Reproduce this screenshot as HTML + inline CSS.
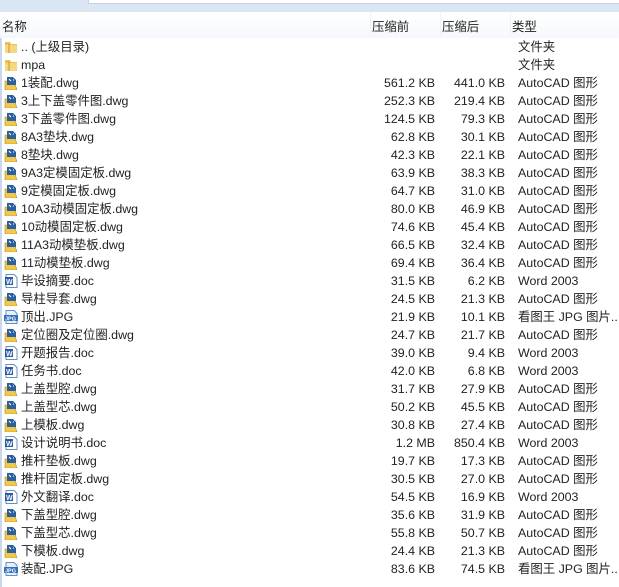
<!DOCTYPE html>
<html><head><meta charset="utf-8"><style>
*{margin:0;padding:0;box-sizing:border-box}
body{width:619px;height:587px;background:#fff;overflow:hidden;position:relative;font-family:"Liberation Sans","Noto Sans CJK SC",sans-serif;font-size:12.4px;color:#222}
.top{position:absolute;left:0;top:0;width:619px;height:12px;background:#dbe6f4}
.topbox{position:absolute;left:88px;top:0;width:531px;height:4px;background:#fff;border-bottom:1px solid #c5d3e6;border-left:1px solid #c5d3e6}
.hdr{position:absolute;left:0;top:12px;width:619px;height:26px;background:linear-gradient(#fff,#f6f8fb)}
.hdr span{position:absolute;top:5px}
.sep{position:absolute;top:12px;width:1px;height:24px;background:#eef1f5}
.lline{position:absolute;left:0;top:38px;width:2px;height:549px;background:#c9d8ea}
.row{position:absolute;left:0;height:18px;width:619px;line-height:18px;white-space:nowrap}
.row .n{position:absolute;left:21px}
.row .a{position:absolute;right:184px}
.row .b{position:absolute;right:114px}
.row .t{position:absolute;left:518px}
.ic{position:absolute;left:4px;top:2px;width:14px;height:14px}
</style></head><body>
<div class="top"></div><div class="topbox"></div>
<div class="hdr"><span style="left:2px">名称</span><span style="left:372px">压缩前</span><span style="left:442px">压缩后</span><span style="left:512px">类型</span></div>
<div class="sep" style="left:370px"></div><div class="sep" style="left:440px"></div><div class="sep" style="left:510px"></div>
<div class="lline"></div>
<svg width="0" height="0" style="position:absolute"><defs>
<symbol id="fo" viewBox="0 0 14 14"><path d="M1 2h5l1 2h6v9H1z" fill="#e8c15a"/><path d="M1 5h12v8H1z" fill="#f5d77f"/><path d="M5 4v9" stroke="#c99a2e"/></symbol>
<symbol id="dw" viewBox="0 0 14 14"><path d="M1 14V5l9 0 3 9z" fill="#f2c84b" stroke="#b08a20" stroke-width=".6"/><path d="M3 1h6l3 3v5L3 9z" fill="#2c5f9e"/><path d="M5 3l2 2M9 4h1" stroke="#fff"/></symbol>
<symbol id="wd" viewBox="0 0 14 14"><path d="M2 0.5h8l3 3v10H2z" fill="#fff" stroke="#6a8fbf"/><rect x="1" y="3" width="8" height="8" fill="#2b5ca8"/><text x="2" y="10" font-size="7" fill="#fff" font-family="Liberation Sans" font-weight="bold">W</text></symbol>
<symbol id="jp" viewBox="0 0 14 14"><path d="M2 0.5h8l3 3v10H2z" fill="#e8f0fa" stroke="#6a8fbf"/><rect x="0" y="5" width="14" height="6" fill="#2f6fbf"/><text x="1" y="10.3" font-size="5.5" fill="#fff" font-family="Liberation Sans" font-weight="bold">JPG</text></symbol>
</defs></svg>
<div class="row" style="top:38px"><svg class="ic"><use href="#fo"/></svg><span class="n">.. (上级目录)</span><span class="t">文件夹</span></div>
<div class="row" style="top:56px"><svg class="ic"><use href="#fo"/></svg><span class="n">mpa</span><span class="t">文件夹</span></div>
<div class="row" style="top:74px"><svg class="ic"><use href="#dw"/></svg><span class="n">1装配.dwg</span><span class="a">561.2 KB</span><span class="b">441.0 KB</span><span class="t">AutoCAD 图形</span></div>
<div class="row" style="top:92px"><svg class="ic"><use href="#dw"/></svg><span class="n">3上下盖零件图.dwg</span><span class="a">252.3 KB</span><span class="b">219.4 KB</span><span class="t">AutoCAD 图形</span></div>
<div class="row" style="top:110px"><svg class="ic"><use href="#dw"/></svg><span class="n">3下盖零件图.dwg</span><span class="a">124.5 KB</span><span class="b">79.3 KB</span><span class="t">AutoCAD 图形</span></div>
<div class="row" style="top:128px"><svg class="ic"><use href="#dw"/></svg><span class="n">8A3垫块.dwg</span><span class="a">62.8 KB</span><span class="b">30.1 KB</span><span class="t">AutoCAD 图形</span></div>
<div class="row" style="top:146px"><svg class="ic"><use href="#dw"/></svg><span class="n">8垫块.dwg</span><span class="a">42.3 KB</span><span class="b">22.1 KB</span><span class="t">AutoCAD 图形</span></div>
<div class="row" style="top:164px"><svg class="ic"><use href="#dw"/></svg><span class="n">9A3定模固定板.dwg</span><span class="a">63.9 KB</span><span class="b">38.3 KB</span><span class="t">AutoCAD 图形</span></div>
<div class="row" style="top:182px"><svg class="ic"><use href="#dw"/></svg><span class="n">9定模固定板.dwg</span><span class="a">64.7 KB</span><span class="b">31.0 KB</span><span class="t">AutoCAD 图形</span></div>
<div class="row" style="top:200px"><svg class="ic"><use href="#dw"/></svg><span class="n">10A3动模固定板.dwg</span><span class="a">80.0 KB</span><span class="b">46.9 KB</span><span class="t">AutoCAD 图形</span></div>
<div class="row" style="top:218px"><svg class="ic"><use href="#dw"/></svg><span class="n">10动模固定板.dwg</span><span class="a">74.6 KB</span><span class="b">45.4 KB</span><span class="t">AutoCAD 图形</span></div>
<div class="row" style="top:236px"><svg class="ic"><use href="#dw"/></svg><span class="n">11A3动模垫板.dwg</span><span class="a">66.5 KB</span><span class="b">32.4 KB</span><span class="t">AutoCAD 图形</span></div>
<div class="row" style="top:254px"><svg class="ic"><use href="#dw"/></svg><span class="n">11动模垫板.dwg</span><span class="a">69.4 KB</span><span class="b">36.4 KB</span><span class="t">AutoCAD 图形</span></div>
<div class="row" style="top:272px"><svg class="ic"><use href="#wd"/></svg><span class="n">毕设摘要.doc</span><span class="a">31.5 KB</span><span class="b">6.2 KB</span><span class="t">Word 2003</span></div>
<div class="row" style="top:290px"><svg class="ic"><use href="#dw"/></svg><span class="n">导柱导套.dwg</span><span class="a">24.5 KB</span><span class="b">21.3 KB</span><span class="t">AutoCAD 图形</span></div>
<div class="row" style="top:308px"><svg class="ic"><use href="#jp"/></svg><span class="n">顶出.JPG</span><span class="a">21.9 KB</span><span class="b">10.1 KB</span><span class="t">看图王 JPG 图片...</span></div>
<div class="row" style="top:326px"><svg class="ic"><use href="#dw"/></svg><span class="n">定位圈及定位圈.dwg</span><span class="a">24.7 KB</span><span class="b">21.7 KB</span><span class="t">AutoCAD 图形</span></div>
<div class="row" style="top:344px"><svg class="ic"><use href="#wd"/></svg><span class="n">开题报告.doc</span><span class="a">39.0 KB</span><span class="b">9.4 KB</span><span class="t">Word 2003</span></div>
<div class="row" style="top:362px"><svg class="ic"><use href="#wd"/></svg><span class="n">任务书.doc</span><span class="a">42.0 KB</span><span class="b">6.8 KB</span><span class="t">Word 2003</span></div>
<div class="row" style="top:380px"><svg class="ic"><use href="#dw"/></svg><span class="n">上盖型腔.dwg</span><span class="a">31.7 KB</span><span class="b">27.9 KB</span><span class="t">AutoCAD 图形</span></div>
<div class="row" style="top:398px"><svg class="ic"><use href="#dw"/></svg><span class="n">上盖型芯.dwg</span><span class="a">50.2 KB</span><span class="b">45.5 KB</span><span class="t">AutoCAD 图形</span></div>
<div class="row" style="top:416px"><svg class="ic"><use href="#dw"/></svg><span class="n">上模板.dwg</span><span class="a">30.8 KB</span><span class="b">27.4 KB</span><span class="t">AutoCAD 图形</span></div>
<div class="row" style="top:434px"><svg class="ic"><use href="#wd"/></svg><span class="n">设计说明书.doc</span><span class="a">1.2 MB</span><span class="b">850.4 KB</span><span class="t">Word 2003</span></div>
<div class="row" style="top:452px"><svg class="ic"><use href="#dw"/></svg><span class="n">推杆垫板.dwg</span><span class="a">19.7 KB</span><span class="b">17.3 KB</span><span class="t">AutoCAD 图形</span></div>
<div class="row" style="top:470px"><svg class="ic"><use href="#dw"/></svg><span class="n">推杆固定板.dwg</span><span class="a">30.5 KB</span><span class="b">27.0 KB</span><span class="t">AutoCAD 图形</span></div>
<div class="row" style="top:488px"><svg class="ic"><use href="#wd"/></svg><span class="n">外文翻译.doc</span><span class="a">54.5 KB</span><span class="b">16.9 KB</span><span class="t">Word 2003</span></div>
<div class="row" style="top:506px"><svg class="ic"><use href="#dw"/></svg><span class="n">下盖型腔.dwg</span><span class="a">35.6 KB</span><span class="b">31.9 KB</span><span class="t">AutoCAD 图形</span></div>
<div class="row" style="top:524px"><svg class="ic"><use href="#dw"/></svg><span class="n">下盖型芯.dwg</span><span class="a">55.8 KB</span><span class="b">50.7 KB</span><span class="t">AutoCAD 图形</span></div>
<div class="row" style="top:542px"><svg class="ic"><use href="#dw"/></svg><span class="n">下模板.dwg</span><span class="a">24.4 KB</span><span class="b">21.3 KB</span><span class="t">AutoCAD 图形</span></div>
<div class="row" style="top:560px"><svg class="ic"><use href="#jp"/></svg><span class="n">装配.JPG</span><span class="a">83.6 KB</span><span class="b">74.5 KB</span><span class="t">看图王 JPG 图片...</span></div>
</body></html>
